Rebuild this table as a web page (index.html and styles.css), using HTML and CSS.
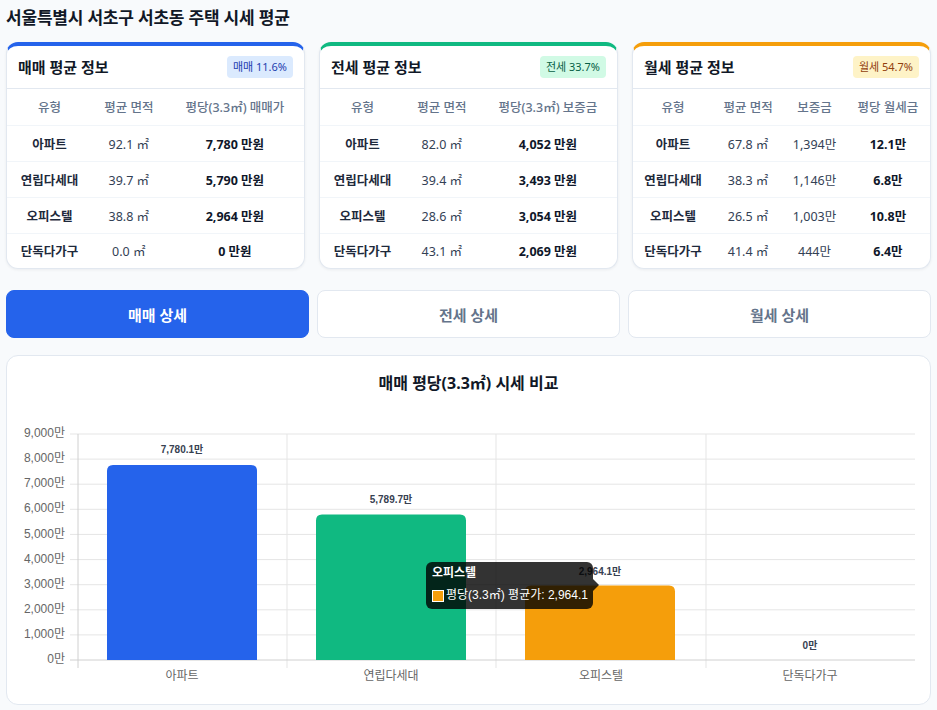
FILE: index.html
```html
<!DOCTYPE html>
<html lang="ko">
<head>
<meta charset="utf-8">
<title>서울특별시 서초구 서초동 주택 시세 평균</title>
<link rel="stylesheet" href="styles.css">
</head>
<body>
<div class="page">
  <h1 class="page-title">서울특별시 서초구 서초동 주택 시세 평균</h1>

  <div class="cards">
    <section class="card card-sale">
      <div class="card-head">
        <h2 class="card-title">매매 평균 정보</h2>
        <span class="badge badge-sale">매매 11.6%</span>
      </div>
      <table class="info">
        <thead><tr><th>유형</th><th>평균 면적</th><th>평당(3.3㎡) 매매가</th></tr></thead>
        <tbody>
          <tr><td class="type">아파트</td><td>92.1 ㎡</td><td class="price">7,780 만원</td></tr>
          <tr><td class="type">연립다세대</td><td>39.7 ㎡</td><td class="price">5,790 만원</td></tr>
          <tr><td class="type">오피스텔</td><td>38.8 ㎡</td><td class="price">2,964 만원</td></tr>
          <tr><td class="type">단독다가구</td><td>0.0 ㎡</td><td class="price">0 만원</td></tr>
        </tbody>
      </table>
    </section>

    <section class="card card-jeonse">
      <div class="card-head">
        <h2 class="card-title">전세 평균 정보</h2>
        <span class="badge badge-jeonse">전세 33.7%</span>
      </div>
      <table class="info">
        <thead><tr><th>유형</th><th>평균 면적</th><th>평당(3.3㎡) 보증금</th></tr></thead>
        <tbody>
          <tr><td class="type">아파트</td><td>82.0 ㎡</td><td class="price">4,052 만원</td></tr>
          <tr><td class="type">연립다세대</td><td>39.4 ㎡</td><td class="price">3,493 만원</td></tr>
          <tr><td class="type">오피스텔</td><td>28.6 ㎡</td><td class="price">3,054 만원</td></tr>
          <tr><td class="type">단독다가구</td><td>43.1 ㎡</td><td class="price">2,069 만원</td></tr>
        </tbody>
      </table>
    </section>

    <section class="card card-monthly">
      <div class="card-head">
        <h2 class="card-title">월세 평균 정보</h2>
        <span class="badge badge-monthly">월세 54.7%</span>
      </div>
      <table class="info">
        <thead><tr><th>유형</th><th>평균 면적</th><th>보증금</th><th>평당 월세금</th></tr></thead>
        <tbody>
          <tr><td class="type">아파트</td><td>67.8 ㎡</td><td>1,394만</td><td class="price">12.1만</td></tr>
          <tr><td class="type">연립다세대</td><td>38.3 ㎡</td><td>1,146만</td><td class="price">6.8만</td></tr>
          <tr><td class="type">오피스텔</td><td>26.5 ㎡</td><td>1,003만</td><td class="price">10.8만</td></tr>
          <tr><td class="type">단독다가구</td><td>41.4 ㎡</td><td>444만</td><td class="price">6.4만</td></tr>
        </tbody>
      </table>
    </section>
  </div>

  <div class="tabs">
    <button class="tab tab-active">매매 상세</button>
    <button class="tab">전세 상세</button>
    <button class="tab">월세 상세</button>
  </div>

  <section class="chart-card">
    <h3 class="chart-title">매매 평당(3.3㎡) 시세 비교</h3>
    <svg class="chart" width="923" height="290" viewBox="0 0 923 290" xmlns="http://www.w3.org/2000/svg">
      <g class="grid">
        <line x1="63" y1="33" x2="908" y2="33"/>
        <line x1="63" y1="58.1" x2="908" y2="58.1"/>
        <line x1="63" y1="83.2" x2="908" y2="83.2"/>
        <line x1="63" y1="108.3" x2="908" y2="108.3"/>
        <line x1="63" y1="133.4" x2="908" y2="133.4"/>
        <line x1="63" y1="158.6" x2="908" y2="158.6"/>
        <line x1="63" y1="183.7" x2="908" y2="183.7"/>
        <line x1="63" y1="208.8" x2="908" y2="208.8"/>
        <line x1="63" y1="233.9" x2="908" y2="233.9"/>
        <line x1="280" y1="33" x2="280" y2="267"/>
        <line x1="489" y1="33" x2="489" y2="267"/>
        <line x1="699" y1="33" x2="699" y2="267"/>
      </g>
      <g class="axis">
        <line x1="71" y1="33" x2="71" y2="267"/>
        <line x1="63" y1="259" x2="908" y2="259"/>
      </g>
      <g class="ylabels">
        <text x="58" y="33">9,000만</text>
        <text x="58" y="58.1">8,000만</text>
        <text x="58" y="83.2">7,000만</text>
        <text x="58" y="108.3">6,000만</text>
        <text x="58" y="133.4">5,000만</text>
        <text x="58" y="158.6">4,000만</text>
        <text x="58" y="183.7">3,000만</text>
        <text x="58" y="208.8">2,000만</text>
        <text x="58" y="233.9">1,000만</text>
        <text x="58" y="259">0만</text>
      </g>
      <path class="bar-sale" d="M100 259V70Q100 64 106 64H244Q250 64 250 70V259Z"/>
      <path class="bar-villa" d="M309 259V119.6Q309 113.6 315 113.6H453Q459 113.6 459 119.6V259Z"/>
      <path class="bar-office" d="M518 259V190.6Q518 184.6 524 184.6H662Q668 184.6 668 190.6V259Z"/>
      <g class="vlabels">
        <text x="175" y="49">7,780.1만</text>
        <text x="384" y="99">5,789.7만</text>
        <text x="593" y="171">2,964.1만</text>
        <text x="803" y="245">0만</text>
      </g>
      <g class="xlabels">
        <text x="175" y="276">아파트</text>
        <text x="384" y="276">연립다세대</text>
        <text x="594" y="276">오피스텔</text>
        <text x="803" y="276">단독다가구</text>
      </g>
      <g class="tooltip">
        <rect x="419" y="161" width="167" height="47" rx="6"/>
        <path d="M586 178L592 184L586 190Z"/>
        <text class="tt-title" x="425" y="173">오피스텔</text>
        <rect class="tt-swatch" x="425.5" y="189.5" width="11" height="11"/>
        <text class="tt-body" x="439" y="195">평당(3.3㎡) 평균가: 2,964.1</text>
      </g>
    </svg>
  </section>
</div>
</body>
</html>
```

FILE: styles.css
```css
* { box-sizing: border-box; }

html, body {
  margin: 0;
  padding: 0;
  background: #f8fafc;
}

body {
  font-family: "Noto Sans", "Noto Sans CJK KR", sans-serif;
  color: #1e293b;
}

.page {
  padding: 6px 6px 0 6px;
}

.page-title {
  margin: 0 0 12px 0;
  font-size: 17px;
  line-height: 24px;
  font-weight: 700;
  color: #111827;
  letter-spacing: -0.2px;
}

.cards {
  display: grid;
  grid-template-columns: repeat(3, 1fr);
  gap: 14px;
}

.card {
  background: #ffffff;
  border: 1px solid #e2e8f0;
  border-top: 4px solid #2563eb;
  border-radius: 12px;
  box-shadow: 0 1px 3px rgba(15, 23, 42, 0.06);
  overflow: hidden;
}

.card-sale { border-top-color: #2563eb; }
.card-jeonse { border-top-color: #10b981; }
.card-monthly { border-top-color: #f59e0b; }

.card-head {
  height: 43px;
  display: flex;
  align-items: center;
  justify-content: space-between;
  padding: 0 11px 0 11px;
  border-bottom: 1px solid #e2e8f0;
}

.card-title {
  margin: 0;
  font-size: 15px;
  line-height: 20px;
  font-weight: 700;
  color: #111827;
}

.badge {
  font-size: 11px;
  line-height: 14px;
  padding: 4px 6px;
  border-radius: 4px;
}

.badge-sale { background: #dbeafe; color: #1e40af; }
.badge-jeonse { background: #d1fae5; color: #065f46; }
.badge-monthly { background: #fef3c7; color: #92400e; }

.info {
  width: 100%;
  border-collapse: collapse;
  font-size: 12.5px;
}

.info th,
.info td {
  height: 36px;
  padding: 0 4px;
  text-align: center;
  white-space: nowrap;
  border-bottom: 1px solid #f1f5f9;
}

.info tbody tr:last-child td {
  border-bottom: none;
  height: 35px;
}

.info th {
  font-weight: 500;
  color: #64748b;
}

.info td {
  color: #334155;
}

.info td.type {
  font-weight: 600;
  color: #1e293b;
}

.info td.price {
  font-weight: 700;
  color: #0f172a;
}

.tabs {
  margin-top: 21px;
  display: grid;
  grid-template-columns: repeat(3, 1fr);
  gap: 8px;
}

.tab {
  height: 48px;
  border: 1px solid #e2e8f0;
  border-radius: 8px;
  background: #ffffff;
  color: #64748b;
  font-family: "Noto Sans", "Noto Sans CJK KR", sans-serif;
  font-size: 15px;
  font-weight: 700;
  padding: 0;
}

.tab-active {
  background: #2563eb;
  border-color: #2563eb;
  color: #ffffff;
}

.chart-card {
  margin-top: 17px;
  background: #ffffff;
  border: 1px solid #e2e8f0;
  border-radius: 12px;
  padding-bottom: 13px;
}

.chart-title {
  margin: 0;
  height: 45px;
  padding-top: 16px;
  font-size: 16px;
  line-height: 22px;
  font-weight: 700;
  text-align: center;
  color: #111827;
}

.chart {
  display: block;
  font-family: "Liberation Sans", "Noto Sans CJK KR", sans-serif;
}

.grid line {
  stroke: #e5e5e5;
  stroke-width: 1;
}

.axis line {
  stroke: #d0d0d0;
  stroke-width: 1;
}

.ylabels text {
  font-size: 12px;
  fill: #666666;
  text-anchor: end;
  dominant-baseline: middle;
}

.xlabels text {
  font-size: 12px;
  fill: #666666;
  text-anchor: middle;
  dominant-baseline: middle;
}

.vlabels text {
  font-size: 10px;
  font-weight: 700;
  fill: #374151;
  text-anchor: middle;
  dominant-baseline: middle;
}

.bar-sale { fill: #2563eb; }
.bar-villa { fill: #10b981; }
.bar-office { fill: #f59e0b; }

.tooltip rect,
.tooltip path {
  fill: rgba(0, 0, 0, 0.8);
}

.tooltip .tt-title {
  font-size: 12px;
  font-weight: 700;
  fill: #ffffff;
  dominant-baseline: middle;
}

.tooltip .tt-body {
  font-size: 12px;
  fill: #ffffff;
  dominant-baseline: middle;
}

.tooltip .tt-swatch {
  fill: #f59e0b;
  stroke: #ffffff;
  stroke-width: 1;
}
```
